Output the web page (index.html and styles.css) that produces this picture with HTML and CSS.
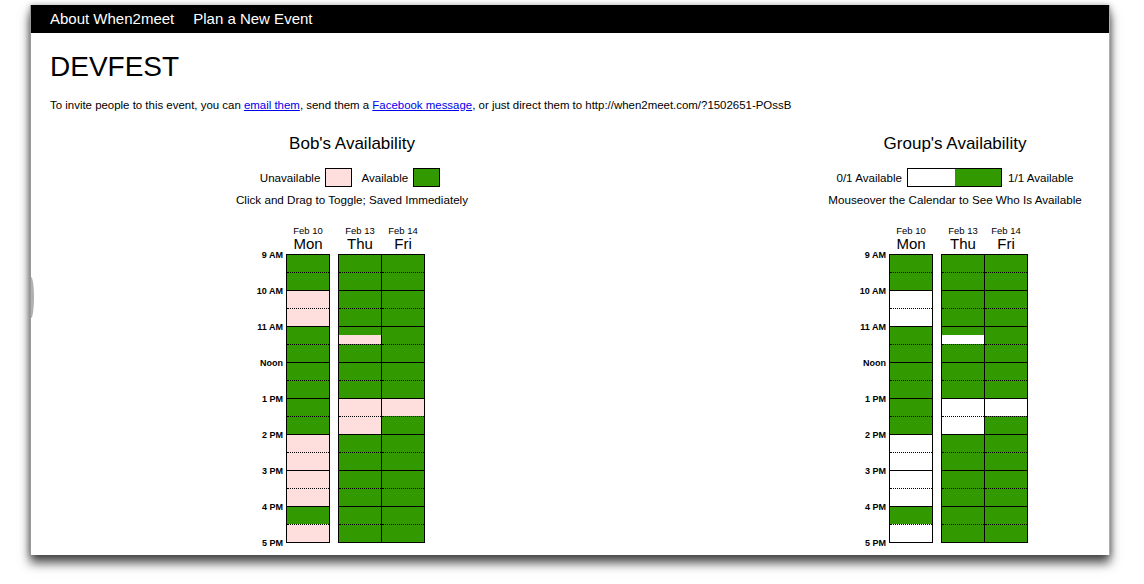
FILE: index.html
```html
<!DOCTYPE html>
<html>
<head>
<meta charset="utf-8">
<title>DEVFEST - When2meet</title>
<link rel="stylesheet" href="styles.css">
</head>
<body>
<div class="window">
  <div class="nav">
    <a class="nav-link" href="#">About When2meet</a>
    <a class="nav-link" href="#">Plan a New Event</a>
  </div>
  <div class="content">
    <h1 class="title">DEVFEST</h1>
    <p class="invite">To invite people to this event, you can <a href="#">email them</a>, send them a <a href="#">Facebook message</a>, or just direct them to http://when2meet.com/?1502651-POssB</p>
    <div class="grids">
      <section class="panel you">
        <h2 class="panel-title">Bob's Availability</h2>
        <div class="legend">
          <span>Unavailable</span><span class="swatch n"></span>
          <span class="legend-gap">Available</span><span class="swatch y"></span>
        </div>
        <div class="note">Click and Drag to Toggle; Saved Immediately</div>
        <div class="grid">
          <div class="times">
            <div class="time">9 AM</div><div class="time">10 AM</div><div class="time">11 AM</div><div class="time">Noon</div><div class="time">1 PM</div><div class="time">2 PM</div><div class="time">3 PM</div><div class="time">4 PM</div><div class="time">5 PM</div>
          </div>
          <div class="daygroup">
            <div class="day last">
              <div class="dayhead"><div class="date">Feb 10</div><div class="dow">Mon</div></div>
              <div class="slots">
                <div class="s y"></div><div class="s y"></div><div class="s n"></div><div class="s n"></div>
                <div class="s y"></div><div class="s y"></div><div class="s y"></div><div class="s y"></div>
                <div class="s y"></div><div class="s y"></div><div class="s n"></div><div class="s n"></div>
                <div class="s n"></div><div class="s n"></div><div class="s y"></div><div class="s n"></div>
              </div>
            </div>
          </div>
          <div class="daygroup">
            <div class="day">
              <div class="dayhead"><div class="date">Feb 13</div><div class="dow">Thu</div></div>
              <div class="slots">
                <div class="s y"></div><div class="s y"></div><div class="s y"></div><div class="s y"></div>
                <div class="s q"></div><div class="s y"></div><div class="s y"></div><div class="s y"></div>
                <div class="s n"></div><div class="s n"></div><div class="s y"></div><div class="s y"></div>
                <div class="s y"></div><div class="s y"></div><div class="s y"></div><div class="s y"></div>
              </div>
            </div>
            <div class="day last">
              <div class="dayhead"><div class="date">Feb 14</div><div class="dow">Fri</div></div>
              <div class="slots">
                <div class="s y"></div><div class="s y"></div><div class="s y"></div><div class="s y"></div>
                <div class="s y"></div><div class="s y"></div><div class="s y"></div><div class="s y"></div>
                <div class="s n"></div><div class="s y"></div><div class="s y"></div><div class="s y"></div>
                <div class="s y"></div><div class="s y"></div><div class="s y"></div><div class="s y"></div>
              </div>
            </div>
          </div>
        </div>
      </section>
      <section class="panel group">
        <h2 class="panel-title">Group's Availability</h2>
        <div class="legend">
          <span>0/1 Available</span><span class="scale"><span class="scale-n"></span><span class="scale-y"></span></span><span>1/1 Available</span>
        </div>
        <div class="note">Mouseover the Calendar to See Who Is Available</div>
        <div class="grid">
          <div class="times">
            <div class="time">9 AM</div><div class="time">10 AM</div><div class="time">11 AM</div><div class="time">Noon</div><div class="time">1 PM</div><div class="time">2 PM</div><div class="time">3 PM</div><div class="time">4 PM</div><div class="time">5 PM</div>
          </div>
          <div class="daygroup">
            <div class="day last">
              <div class="dayhead"><div class="date">Feb 10</div><div class="dow">Mon</div></div>
              <div class="slots">
                <div class="s y"></div><div class="s y"></div><div class="s n"></div><div class="s n"></div>
                <div class="s y"></div><div class="s y"></div><div class="s y"></div><div class="s y"></div>
                <div class="s y"></div><div class="s y"></div><div class="s n"></div><div class="s n"></div>
                <div class="s n"></div><div class="s n"></div><div class="s y"></div><div class="s n"></div>
              </div>
            </div>
          </div>
          <div class="daygroup">
            <div class="day">
              <div class="dayhead"><div class="date">Feb 13</div><div class="dow">Thu</div></div>
              <div class="slots">
                <div class="s y"></div><div class="s y"></div><div class="s y"></div><div class="s y"></div>
                <div class="s q"></div><div class="s y"></div><div class="s y"></div><div class="s y"></div>
                <div class="s n"></div><div class="s n"></div><div class="s y"></div><div class="s y"></div>
                <div class="s y"></div><div class="s y"></div><div class="s y"></div><div class="s y"></div>
              </div>
            </div>
            <div class="day last">
              <div class="dayhead"><div class="date">Feb 14</div><div class="dow">Fri</div></div>
              <div class="slots">
                <div class="s y"></div><div class="s y"></div><div class="s y"></div><div class="s y"></div>
                <div class="s y"></div><div class="s y"></div><div class="s y"></div><div class="s y"></div>
                <div class="s n"></div><div class="s y"></div><div class="s y"></div><div class="s y"></div>
                <div class="s y"></div><div class="s y"></div><div class="s y"></div><div class="s y"></div>
              </div>
            </div>
          </div>
        </div>
      </section>
    </div>
  </div>
  <div class="edge-bump"></div>
</div>
</body>
</html>
```
FILE: styles.css
```css
html, body {
  margin: 0;
  padding: 0;
  background: #fff;
}
body {
  font-family: "Liberation Sans", Arial, Helvetica, sans-serif;
  color: #000;
  height: 584px;
}
.window {
  position: relative;
  margin: 5px 0 0 30px;
  width: 1078px;
  height: 550px;
  background: #fff;
  border-left: 1px solid #9a9a9a;
  border-right: 1px solid #b0b0b0;
  box-shadow: 0 8px 10px rgba(0, 0, 0, 0.7), 0 0 6px rgba(0, 0, 0, 0.3);
  overflow: hidden;
}
.nav {
  height: 28px;
  background: #000;
  display: flex;
  align-items: center;
  gap: 19px;
  padding-left: 19px;
}
.nav-link {
  color: #fff;
  text-decoration: none;
  font-size: 15px;
  line-height: 18px;
}
.content {
  padding: 0 19px;
}
.title {
  margin: 18px 0 0;
  font-size: 28px;
  line-height: 32px;
  font-weight: normal;
}
.invite {
  margin: 15px 0 0;
  font-size: 11.45px;
  line-height: 14px;
}
.invite a {
  color: #00e;
}
.grids {
  display: flex;
  padding-left: 167px;
  gap: 333px;
  margin-top: 22px;
}
.panel {
  width: 270px;
  flex: none;
  text-align: center;
}
.panel-title {
  margin: 0;
  font-size: 17px;
  line-height: 20px;
  font-weight: normal;
}
.legend {
  margin-top: 14px;
  height: 19px;
  display: flex;
  justify-content: center;
  align-items: center;
  font-size: 11.6px;
}
.you .legend {
  padding-right: 4px;
}
.swatch {
  display: block;
  width: 27px;
  height: 19px;
  box-sizing: border-box;
  border: 1px solid #000;
  margin-left: 5px;
}
.swatch.n { background: #ffdede; }
.swatch.y { background: #339900; }
.legend-gap {
  margin-left: 9px;
}
.scale {
  display: flex;
  width: 95px;
  height: 19px;
  box-sizing: border-box;
  border: 1px solid #000;
  margin: 0 6px 0 5px;
}
.scale-n { flex: 1; background: #fff; }
.scale-y { flex: 1; background: #339900; }
.note {
  margin-top: 6px;
  font-size: 11.65px;
  line-height: 14px;
}
.grid {
  display: flex;
  margin-top: 19px;
  text-align: left;
}
.times {
  width: 66px;
  margin-right: 3px;
  padding-top: 24px;
}
.time {
  height: 36px;
  line-height: 10px;
  font-size: 9px;
  font-weight: bold;
  text-align: right;
}
.daygroup {
  display: flex;
}
.daygroup + .daygroup {
  margin-left: 8px;
}
.day {
  width: 43px;
}
.day.last {
  width: 44px;
}
.dayhead {
  height: 26px;
  padding: 0 0 2px 1px;
  width: 42px;
  text-align: center;
}
.date {
  font-size: 9.5px;
  line-height: 10px;
}
.dow {
  font-size: 15px;
  line-height: 16px;
}
.slots {
  border-left: 1px solid #000;
  border-bottom: 1px solid #000;
}
.day.last .slots {
  border-right: 1px solid #000;
}
.s {
  height: 18px;
  box-sizing: border-box;
}
.s:nth-child(odd) {
  border-top: 1px solid #000;
}
.s:nth-child(even) {
  border-top: 1px dotted #000;
}
.s.y { background: #339900; }
.you .s.n { background: #ffdede; }
.group .s.n { background: #fff; }
.you .s.q { background: linear-gradient(#339900 0 8px, #ffdede 8px); }
.group .s.q { background: linear-gradient(#339900 0 8px, #fff 8px); }
.edge-bump {
  position: absolute;
  left: 0;
  top: 272px;
  width: 3px;
  height: 41px;
  background: #b0b0b0;
  border-radius: 0 100% 100% 0 / 0 50% 50% 0;
}
```
